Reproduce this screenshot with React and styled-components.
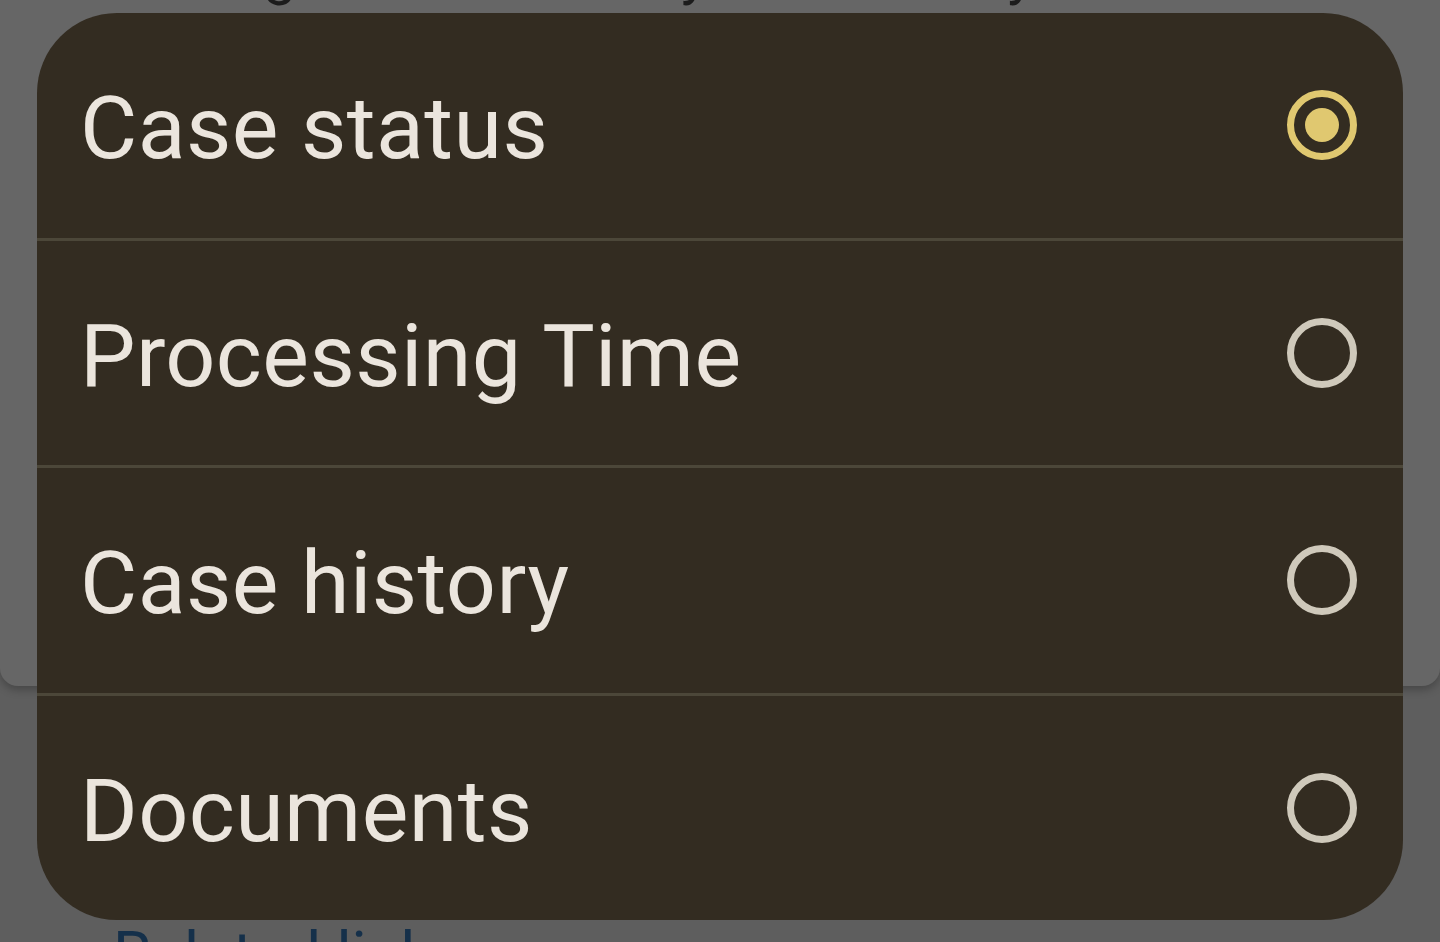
import React, { useState } from "react";
import styled, { createGlobalStyle } from "styled-components";

const Global = createGlobalStyle`
  html, body { margin: 0; padding: 0; }
  body { background: #5e5e5e; font-family: Roboto, "Noto Sans", "Liberation Sans", sans-serif; }
  #root { width: 1440px; height: 942px; overflow: hidden; position: relative; }
`;

const Backdrop = styled.div`
  width: 1440px;
  height: 942px;
  background: #5e5e5e;
  display: flex;
  flex-direction: column;
  overflow: hidden;
`;

const BehindCard = styled.div`
  flex: 0 0 686px;
  background: #666666;
  border-radius: 0 0 18px 18px;
  box-shadow: 0 4px 8px rgba(0, 0, 0, 0.25);
  overflow: hidden;
`;

const BehindTitle = styled.div`
  margin: -57px 0 0 118px;
  font-size: 58px;
  line-height: 60px;
  color: #1c1c1c;
  white-space: nowrap;
`;

const BehindLink = styled.div`
  flex: 0 0 auto;
  margin: 233px 0 0 113px;
  font-size: 62px;
  line-height: 70px;
  color: #15304a;
  white-space: nowrap;
`;

const Dialog = styled.div`
  position: absolute;
  left: 37px;
  top: 13px;
  width: 1366px;
  height: 907px;
  background: #332c21;
  border-radius: 80px;
  overflow: hidden;
  display: flex;
  flex-direction: column;
`;

const Option = styled.div`
  flex: 1;
  display: flex;
  align-items: center;
  justify-content: space-between;
  padding: 0 46px 0 43px;
  border-top: ${(p) => (p.$first ? "none" : "3px solid #4c4739")};
  cursor: pointer;
`;

const Label = styled.span`
  font-family: Roboto, "Noto Sans", sans-serif;
  font-size: 88px;
  line-height: 1;
  color: #ebe5dd;
  letter-spacing: 0.4px;
  margin-top: 6px;
`;

const Radio = styled.span`
  box-sizing: border-box;
  width: 70px;
  height: 70px;
  border-radius: 50%;
  border: 7px solid ${(p) => (p.$checked ? "#e0c870" : "#cfc9bb")};
  display: flex;
  align-items: center;
  justify-content: center;
  &::after {
    content: "";
    width: 34px;
    height: 34px;
    border-radius: 50%;
    background: #e0c870;
    display: ${(p) => (p.$checked ? "block" : "none")};
  }
`;

const options = ["Case status", "Processing Time", "Case history", "Documents"];

export default function App() {
  const [sel, setSel] = useState(0);
  return (
    <>
      <Global />
      <Backdrop>
        <BehindCard>
          <BehindTitle>Manage the status of your case anytime</BehindTitle>
        </BehindCard>
        <BehindLink>Related links</BehindLink>
      </Backdrop>
      <Dialog role="radiogroup">
        {options.map((o, i) => (
          <Option key={o} $first={i === 0} onClick={() => setSel(i)} role="radio" aria-checked={sel === i}>
            <Label>{o}</Label>
            <Radio $checked={sel === i} />
          </Option>
        ))}
      </Dialog>
    </>
  );
}
